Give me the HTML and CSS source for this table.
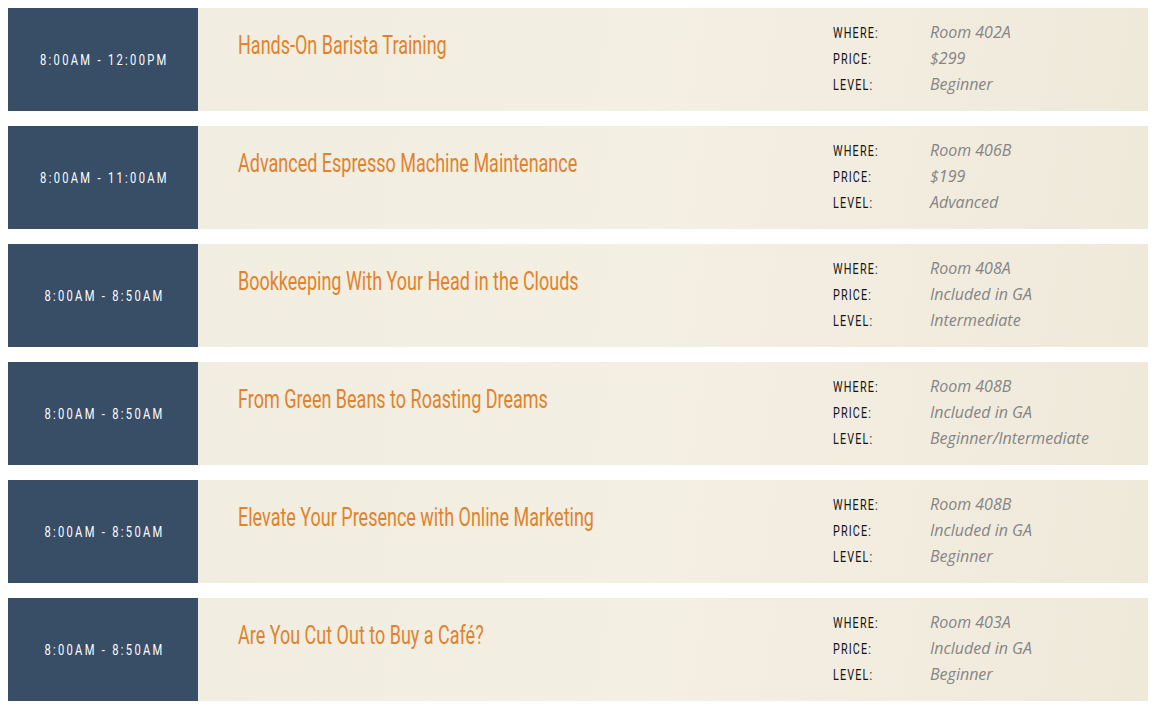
FILE: index.html
```html
<!DOCTYPE html>
<html>
<head>
<meta charset="utf-8">
<link rel="stylesheet" href="styles.css">
</head>
<body>
<div class="schedule">
  <div class="session">
    <div class="time"><span>8:00AM - 12:00PM</span></div>
    <div class="info">
      <h3 class="title"><span>Hands-On Barista Training</span></h3>
      <dl class="meta">
        <dt>WHERE:</dt><dd>Room 402A</dd>
        <dt>PRICE:</dt><dd>$299</dd>
        <dt>LEVEL:</dt><dd>Beginner</dd>
      </dl>
    </div>
  </div>
  <div class="session">
    <div class="time"><span>8:00AM - 11:00AM</span></div>
    <div class="info">
      <h3 class="title"><span>Advanced Espresso Machine Maintenance</span></h3>
      <dl class="meta">
        <dt>WHERE:</dt><dd>Room 406B</dd>
        <dt>PRICE:</dt><dd>$199</dd>
        <dt>LEVEL:</dt><dd>Advanced</dd>
      </dl>
    </div>
  </div>
  <div class="session">
    <div class="time"><span>8:00AM - 8:50AM</span></div>
    <div class="info">
      <h3 class="title"><span>Bookkeeping With Your Head in the Clouds</span></h3>
      <dl class="meta">
        <dt>WHERE:</dt><dd>Room 408A</dd>
        <dt>PRICE:</dt><dd>Included in GA</dd>
        <dt>LEVEL:</dt><dd>Intermediate</dd>
      </dl>
    </div>
  </div>
  <div class="session">
    <div class="time"><span>8:00AM - 8:50AM</span></div>
    <div class="info">
      <h3 class="title"><span>From Green Beans to Roasting Dreams</span></h3>
      <dl class="meta">
        <dt>WHERE:</dt><dd>Room 408B</dd>
        <dt>PRICE:</dt><dd>Included in GA</dd>
        <dt>LEVEL:</dt><dd>Beginner/Intermediate</dd>
      </dl>
    </div>
  </div>
  <div class="session">
    <div class="time"><span>8:00AM - 8:50AM</span></div>
    <div class="info">
      <h3 class="title"><span>Elevate Your Presence with Online Marketing</span></h3>
      <dl class="meta">
        <dt>WHERE:</dt><dd>Room 408B</dd>
        <dt>PRICE:</dt><dd>Included in GA</dd>
        <dt>LEVEL:</dt><dd>Beginner</dd>
      </dl>
    </div>
  </div>
  <div class="session">
    <div class="time"><span>8:00AM - 8:50AM</span></div>
    <div class="info">
      <h3 class="title"><span>Are You Cut Out to Buy a Café?</span></h3>
      <dl class="meta">
        <dt>WHERE:</dt><dd>Room 403A</dd>
        <dt>PRICE:</dt><dd>Included in GA</dd>
        <dt>LEVEL:</dt><dd>Beginner</dd>
      </dl>
    </div>
  </div>
</div>
</body>
</html>
```

FILE: styles.css
```css
html, body {
  margin: 0;
  padding: 0;
  background: #fff;
}
body {
  padding: 8px 11px 8px 8px;
}
.schedule {
  display: flex;
  flex-direction: column;
  gap: 15px;
}
.session {
  display: flex;
  height: 103px;
}
.time {
  width: 190px;
  flex: none;
  background: #374e66;
  color: #fff;
  display: flex;
  align-items: center;
  justify-content: center;
  font-family: "Roboto", sans-serif;
  font-size: 15.5px;
  letter-spacing: 3.2px;
  padding-top: 1px;
  white-space: nowrap;
}
.time span {
  display: inline-block;
  transform: scaleX(0.72);
  transform-origin: center;
  margin-right: -3px;
}
.info {
  flex: 1;
  display: flex;
  background: linear-gradient(100deg, #f2ede1 0%, #f4efe3 50%, #efe9da 100%);
  padding-left: 40px;
}
.title {
  flex: 1;
  margin: 0;
  padding-top: 23px;
  font-family: "Roboto", sans-serif;
  font-weight: normal;
  font-size: 25px;
  line-height: 30px;
  color: #e0832c;
  white-space: nowrap;
}
.title span {
  display: inline-block;
  transform: scaleX(0.72);
  transform-origin: left center;
}
.meta {
  width: 315px;
  flex: none;
  margin: 0;
  padding-top: 11px;
  display: grid;
  grid-template-columns: 97px auto;
  grid-auto-rows: 26px;
  align-content: start;
}
.meta dt {
  font-family: "Roboto", sans-serif;
  font-size: 15px;
  letter-spacing: 1.6px;
  color: #141414;
  line-height: 26px;
  padding-top: 1px;
  white-space: nowrap;
  transform: scaleX(0.72);
  transform-origin: left center;
}
.meta dd {
  margin: 0;
  font-family: "Open Sans", sans-serif;
  font-style: italic;
  font-size: 16px;
  line-height: 26px;
  color: #858585;
}
```
